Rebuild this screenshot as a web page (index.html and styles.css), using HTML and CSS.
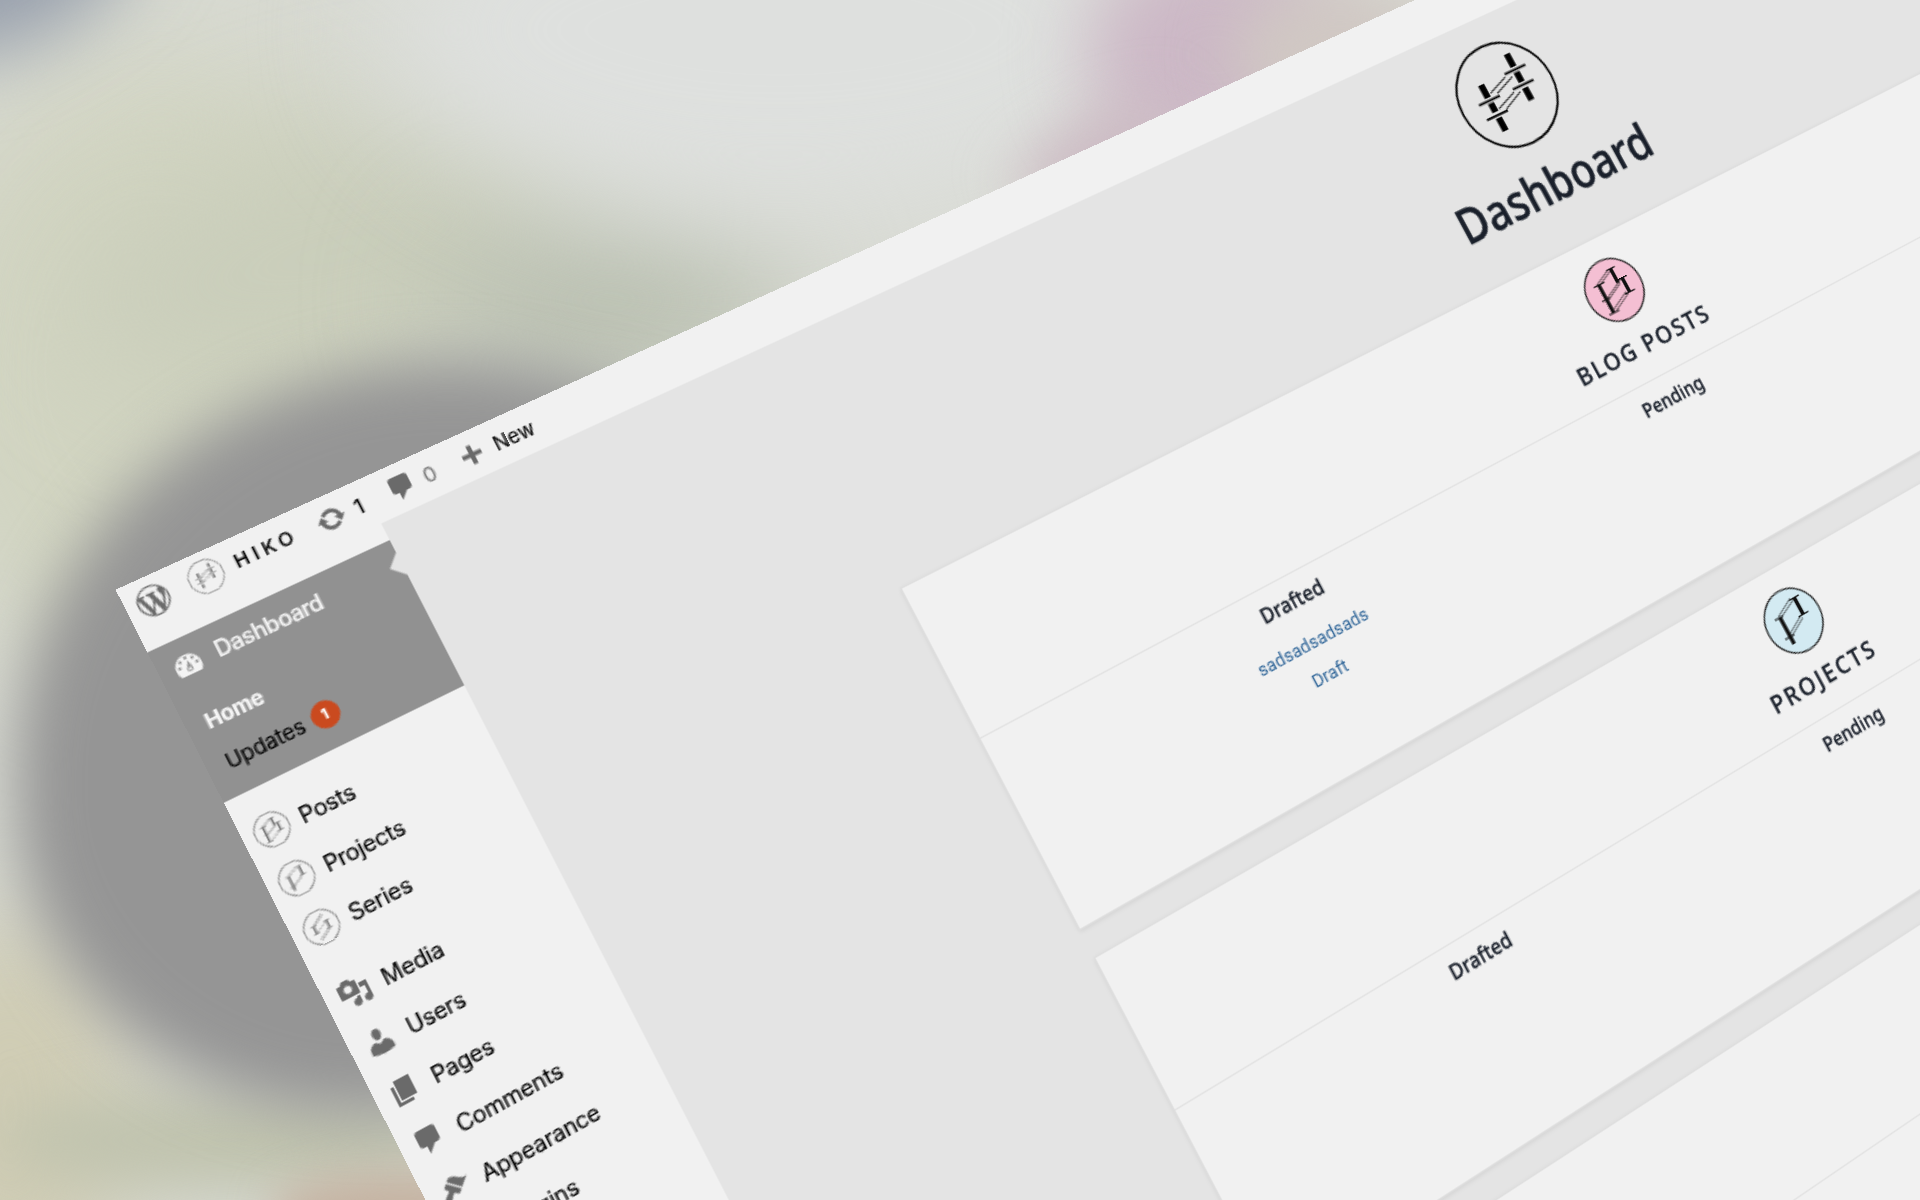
FILE: index.html
```html
<!DOCTYPE html>
<html lang="en">
<head>
<meta charset="utf-8">
<title>Dashboard</title>
<link rel="stylesheet" href="styles.css">
</head>
<body>
<div class="backdrop" aria-hidden="true">
  <i class="blob cream"></i><i class="blob olive"></i><i class="blob sage"></i><i class="blob mist"></i><i class="blob blue"></i>
  <i class="blob mauve"></i><i class="blob sand"></i><i class="blob taupe"></i><i class="blob straw"></i><i class="blob moss"></i><i class="blob clay"></i>
  <i class="blob shadow"></i>
</div>

<svg width="0" height="0" class="defs">
  <symbol id="wp" viewBox="0 0 20 20"><path d="M20 10c0-5.51-4.49-10-10-10C4.48 0 0 4.49 0 10c0 5.52 4.48 10 10 10 5.51 0 10-4.48 10-10zM7.78 15.37L4.37 6.22c.55-.02 1.17-.08 1.17-.08.5-.06.44-1.13-.06-1.11 0 0-1.45.11-2.37.11-.18 0-.37 0-.58-.01C4.12 2.69 6.87 1.11 10 1.11c2.33 0 4.45.87 6.05 2.34-.68-.11-1.65.39-1.65 1.58 0 .74.45 1.36.9 2.1.35.61.55 1.36.55 2.46 0 1.49-1.4 5-1.4 5l-3.03-8.37c.54-.02.82-.17.82-.17.5-.05.44-1.25-.06-1.22 0 0-1.44.12-2.38.12-.87 0-2.33-.12-2.33-.12-.5-.03-.56 1.2-.06 1.22l.92.08 1.26 3.41zM17.41 10c.24-.64.74-1.87.43-4.25.7 1.29 1.05 2.71 1.05 4.25 0 3.29-1.73 6.24-4.4 7.78.97-2.59 1.94-5.2 2.92-7.78zM6.1 18.09C3.12 16.65 1.11 13.53 1.11 10c0-1.3.23-2.48.72-3.59C3.25 10.3 4.67 14.2 6.1 18.09zm4.03-6.63l2.58 6.98c-.86.29-1.76.45-2.71.45-.79 0-1.57-.11-2.29-.33.81-2.38 1.62-4.74 2.42-7.1z"/></symbol>
  <symbol id="update" viewBox="0 0 20 20"><path d="M10.2 3.28c3.53 0 6.43 2.61 6.92 6h2.08l-3.5 4-3.5-4h2.32c-.45-1.97-2.21-3.45-4.32-3.45-1.45 0-2.73.71-3.54 1.78L4.95 5.66C6.23 4.2 8.11 3.28 10.2 3.28zm-.4 13.44c-3.52 0-6.43-2.61-6.92-6H.8l3.5-4c1.17 1.33 2.33 2.67 3.5 4H5.48c.45 1.97 2.21 3.45 4.32 3.45 1.45 0 2.73-.71 3.54-1.78l1.71 1.95c-1.28 1.46-3.15 2.38-5.25 2.38z"/></symbol>
  <symbol id="comment" viewBox="0 0 20 20"><path d="M5 2h9c1.1 0 2 .9 2 2v7c0 1.1-.9 2-2 2h-2l-5 5v-5H5c-1.1 0-2-.9-2-2V4c0-1.1.9-2 2-2z"/></symbol>
  <symbol id="plus" viewBox="0 0 20 20"><path d="M17 8.500v3h-5v5H9v-5H4v-3h5v-5h3v5h5z"/></symbol>
  <symbol id="gauge" viewBox="0 0 20 20"><path fill-rule="evenodd" d="M3.760 17h12.480c1.340-1.250 1.760-3.180 1.760-5.220C18 7.500 14.420 4 10 4s-8 3.500-8 7.780c0 2.040.42 3.970 1.760 5.220zM9 6a1 1 0 1 0 2 0 1 1 0 1 0-2 0zM5.200 7.500a1 1 0 1 0 2 0 1 1 0 1 0-2 0zM12.900 7.500a1 1 0 1 0 2 0 1 1 0 1 0-2 0zM3.500 11a1 1 0 1 0 2 0 1 1 0 1 0-2 0zM14.500 11a1 1 0 1 0 2 0 1 1 0 1 0-2 0zM10.700 8l1.100 4.600c.5 1.600-.4 2.700-1.700 2.700-1.400 0-2.300-1.200-1.700-2.500zM10.100 12.600a.9.9 0 1 0 .01 0z"/></symbol>
  <symbol id="media" viewBox="0 0 20 20"><path d="M13 11V4c0-.55-.45-1-1-1h-1.670L9 1H5L3.670 3H2c-.55 0-1 .45-1 1v7c0 .55.45 1 1 1h10c.55 0 1-.45 1-1zM7 4.500c1.380 0 2.500 1.120 2.500 2.500S8.380 9.500 7 9.500 4.500 8.380 4.500 7 5.620 4.500 7 4.500zM14 6h5v10.500c0 1.380-1.120 2.500-2.500 2.500S14 17.880 14 16.500s1.120-2.500 2.500-2.500c.17 0 .34.02.5.05V9h-3V6zm-4 8.050V13h2v3.500c0 1.380-1.120 2.500-2.500 2.500S7 17.880 7 16.500 8.120 14 9.500 14c.17 0 .34.02.5.05z"/></symbol>
  <symbol id="user" viewBox="0 0 20 20"><path d="M10 9.250c-2.270 0-2.730-3.440-2.730-3.440C7 4.020 7.820 2 9.970 2c2.160 0 2.980 2.020 2.710 3.810 0 0-.41 3.440-2.680 3.440zm0 2.570L12.720 10c2.390 0 4.520 2.330 4.520 4.530v2.490s-3.650 1.130-7.240 1.130c-3.650 0-7.240-1.130-7.240-1.130v-2.490c0-2.250 1.940-4.480 4.470-4.480z"/></symbol>
  <symbol id="pages" viewBox="0 0 20 20"><path d="M6 15V2h10v13H6zm-1 1h8v2H3V5h2v11z"/></symbol>
  <symbol id="brush" viewBox="0 0 20 20"><path d="M14.480 11.060L7.410 3.990l1.500-1.500c.5-.56 2.300-.47 3.510.32 1.210.8 1.430 1.280 2.910 2.100 1.180.64 2.450 1.260 4.450.85zm-.71.71L6.700 4.700 4.930 6.470c-.39.39-.39 1.020 0 1.410l1.060 1.060c.39.39.39 1.030 0 1.420-.6.6-1.430 1.110-2.210 1.690-.35.26-.7.53-1.010.84C1.430 14.230.4 16.080 1.400 17.070c.99 1 2.840-.03 4.180-1.360.31-.31.58-.66.85-1.020.57-.78 1.080-1.610 1.690-2.210.39-.39 1.020-.39 1.410 0l1.060 1.060c.39.39 1.020.39 1.410 0z"/></symbol>

  <symbol id="mark-h" viewBox="-42 -42 84 84">
    <circle r="40.900" fill="none" stroke="currentColor" stroke-width="1.700"/>
    <path fill="none" stroke="currentColor" stroke-width="5.400" d="M-15.800-15V-4M-15.800.5V8M-15.800 13V24M16-28V-17M16-12.500V-4M16 1V11.500"/>
    <path fill="none" stroke="currentColor" stroke-width="1.700" d="M-25.500-1.700h19.500M-25.500 10.800h19.500M6.200-14.600h19.500M6.200-1.600h19.500"/>
    <path fill="none" stroke="currentColor" stroke-width=".9" d="M-12-6.300L5.500-12.600M-7-4L11-10.600M-12 7L6 .5M-6.500 9.600L11 2.200"/>
  </symbol>
  <symbol id="mark-b" viewBox="-25 -25 50 50">
    <circle class="disc" r="24.200" stroke="currentColor" stroke-width="1.100"/>
    <path fill="none" stroke="currentColor" stroke-width="3" d="M-9.800-8.500V15M5.500-15.500V-3.500M10.500-5.500V6.500"/>
    <path fill="none" stroke="currentColor" stroke-width="1.100" d="M-14.500-8.500h10M-14 3.700h7.500M-14 15h9.500M1.500-15.500h8M7-5.500h8M6 6.500h9.500"/>
    <path fill="none" stroke="currentColor" stroke-width=".6" d="M-11.500-9L3-15.500M-8-8.500L4-13.800M-8.500 3L10-5.500M-8.500 4.800L7-2.500M-7 14.500L9 7M-8 12.500L8 5"/>
  </symbol>
  <symbol id="mark-p" viewBox="-25 -25 50 50">
    <circle class="disc" r="24.200" stroke="currentColor" stroke-width="1.100"/>
    <path fill="none" stroke="currentColor" stroke-width="3.200" d="M-9-7V15M9.500-14.500V-.5"/>
    <path fill="none" stroke="currentColor" stroke-width="1.100" d="M-14-7h8M-14 9h9M4.500-14.500h9.500M5-.5h9.500"/>
    <path fill="none" stroke="currentColor" stroke-width=".6" d="M-10-8L6-15.500M-7-7L8-13.500M-9 7.500L7-.5M-7 9L8 1.500"/>
  </symbol>
  <symbol id="mark-s" viewBox="-25 -25 50 50">
    <circle class="disc" r="24.200" stroke="currentColor" stroke-width="1.100"/>
    <path fill="none" stroke="currentColor" stroke-width="3" d="M-9.500-5V6M9.500-6V5"/>
    <path fill="none" stroke="currentColor" stroke-width="1.200" d="M-14-5h9M-14 6h9M5-6h9M5 5h9"/>
    <path fill="none" stroke="currentColor" stroke-width=".9" d="M-10-6L7-17M-8-5L9-15M-9 5L9-5M-9 15L9 5M-7 17L10 7"/>
  </symbol>
</svg>

<div class="screen">
  <header class="adminbar">
    <svg class="ico"><use href="#wp"/></svg>
    <svg class="mark site"><use href="#mark-h"/></svg>
    <span class="brand">HIKO</span>
    <svg class="ico"><use href="#update"/></svg><span class="n-upd">1</span>
    <svg class="ico"><use href="#comment"/></svg><span class="n-com">0</span>
    <svg class="ico"><use href="#plus"/></svg><span class="new">New</span>
  </header>
  <div class="body">
    <nav class="menu">
      <div class="current">
        <a class="item"><svg class="ico"><use href="#gauge"/></svg>Dashboard</a>
        <div class="sub"><a class="on">Home</a><a>Updates<b class="badge">1</b></a></div>
      </div>
      <div class="group">
        <a class="item"><svg class="mark"><use href="#mark-b"/></svg>Posts</a>
        <a class="item"><svg class="mark"><use href="#mark-p"/></svg>Projects</a>
        <a class="item"><svg class="mark"><use href="#mark-s"/></svg>Series</a>
      </div>
      <div class="group">
        <a class="item"><svg class="ico"><use href="#media"/></svg>Media</a>
        <a class="item"><svg class="ico"><use href="#user"/></svg>Users</a>
        <a class="item"><svg class="ico"><use href="#pages"/></svg>Pages</a>
        <a class="item"><svg class="ico"><use href="#comment"/></svg>Comments</a>
        <a class="item"><svg class="ico"><use href="#brush"/></svg>Appearance</a>
        <a class="item plain">Plugins</a>
      </div>
    </nav>
    <main class="main">
      <svg class="logo"><use href="#mark-h"/></svg>
      <h1 class="title">Dashboard</h1>
      <section class="panel">
        <div class="head"><svg class="emblem pink"><use href="#mark-b"/></svg><h2>BLOG POSTS</h2></div>
        <div class="cols">
          <div class="col"><h3>Drafted</h3><a>sadsadsadsads</a><a>Draft</a></div>
          <div class="col"><h3>Pending</h3></div>
          <div class="col"></div>
        </div>
      </section>
      <section class="panel">
        <div class="head"><svg class="emblem sky"><use href="#mark-p"/></svg><h2 class="wide">PROJECTS</h2></div>
        <div class="cols">
          <div class="col"><h3>Drafted</h3></div>
          <div class="col"><h3>Pending</h3></div>
          <div class="col"></div>
        </div>
      </section>
      <section class="panel"><div class="head"></div></section>
    </main>
  </div>
</div>
</body>
</html>
```
FILE: styles.css
```css
* { box-sizing: border-box; }
html, body { margin: 0; height: 100%; overflow: hidden; }
body { position: relative; background: #d9dbd3; font-family: Inter, "Liberation Sans", sans-serif; }
.defs { position: absolute; }

/* out-of-focus photograph behind the screen */
.backdrop { position: absolute; inset: 0; overflow: hidden; background: #d8dad2; }
.blob { position: absolute; border-radius: 50%; filter: blur(60px); }
.cream { left: -100px; top: 60px; width: 520px; height: 620px; background: #d1d4c1; }
.olive { left: 60px; top: 130px; width: 560px; height: 240px; background: #cacebb; transform: rotate(-15deg); }
.sage { left: 430px; top: 210px; width: 360px; height: 180px; background: #b9bfb0; }
.mist { left: 380px; top: -160px; width: 800px; height: 380px; background: #dee0de; }
.blue { left: -140px; top: -125px; width: 290px; height: 170px; background: #98a0ad; filter: blur(38px); transform: rotate(-25deg); }
.mauve { left: 1085px; top: -60px; width: 260px; height: 230px; background: #ccb8c6; filter: blur(38px); }
.sand { left: 1230px; top: -10px; width: 220px; height: 130px; background: #d0c8c3; filter: blur(30px); }
.taupe { left: 1010px; top: 120px; width: 180px; height: 70px; background: #cbb8c2; filter: blur(28px); transform: rotate(-25deg); }
.straw { left: -120px; top: 920px; width: 260px; height: 380px; background: #cfccb4; filter: blur(50px); }
.moss { left: 0; top: 1090px; width: 460px; height: 100px; background: #c0c3ae; filter: blur(28px); }
.clay { left: 270px; top: 1172px; width: 260px; height: 80px; background: #c5b3a2; filter: blur(20px); }
.shadow { left: 16px; top: 362px; width: 860px; height: 752px; background: #959595; filter: blur(30px); border-radius: 50% 50% 50% 40% / 55% 45% 50% 42%; }

/* the admin screen, seen in perspective */
.screen {
  position: absolute; left: 0; top: 0; width: 1898px; height: 1500px;
  background: #e4e4e4; transform-origin: 0 0;
  transform: matrix3d(1.591733, -0.591244, 0, 0.000204138, 0.719609, 1.406863, 0, -0.000029476, 0, 0, 1, 0, 115.55, 589.7, 0, 1);
}
.ico { width: 20px; height: 20px; fill: #6a6a6a; display: block; flex: none; }
.mark { width: 22px; height: 22px; display: block; flex: none; color: #777; }
.disc { fill: var(--disc, none); }

.adminbar { height: 32px; background: #f1f1f1; display: flex; align-items: center; padding: 0 0 1px 7px; font-size: 13px; color: #000; -webkit-text-stroke: .15px; }
.site { margin-left: 13px; }
.brand { margin-left: 8px; width: 54px; font-weight: 500; font-size: 12px; letter-spacing: 3px; }
.n-upd { margin-left: 6px; width: 22px; }
.n-com { margin-left: 5px; width: 23px; color: #777; }
.new { margin-left: 6px; }

.body { display: flex; height: 1468px; }
.menu { position: relative; width: 160px; flex: none; background: #f1f1f1; padding-top: 12px; font-size: 14px; letter-spacing: -.2px; color: #000; -webkit-text-stroke: .15px; }
.item { display: flex; align-items: center; height: 34px; }
.item .ico { margin: 0 8px; }
.item .mark { margin: 0 7px; }
.item.plain { padding-left: 36px; }
.current { background: #919191; }
.current .item { color: #f6f6f6; font-weight: 500; letter-spacing: -.35px; padding-bottom: 1px; }
.current .ico { fill: #f4f4f4; }
.menu::after { content: ""; position: absolute; left: 152px; top: 21px; border: 8px solid transparent; border-right-color: #e4e4e4; border-left: 0; }
.sub { padding: 7px 12px 8px; font-size: 13px; color: #000; letter-spacing: -.1px; }
.sub a { display: flex; align-items: center; height: 28px; }
.sub .on { color: #f8f8f8; font-weight: 700; letter-spacing: -.2px; }
.badge { width: 18px; height: 18px; margin-left: 5px; border-radius: 50%; background: #ca4a1f; color: #fff; font-size: 9px; font-weight: 700; line-height: 18px; text-align: center; letter-spacing: 0; }
.group { padding-top: 11px; }

.main { flex: 1; padding: 20px 282px 0 280px; display: flex; flex-direction: column; align-items: center; font-family: "Noto Sans", "Open Sans", sans-serif; color: #1a202b; }
.logo { width: 84px; height: 84px; color: #000; flex: none; }
.title { margin: 7px 0 24px; height: 52px; line-height: 52px; font-size: 37px; font-weight: 500; -webkit-text-stroke: .5px; transform: scaleX(.918); }
.panel { width: 1174px; height: 259px; flex: none; margin-bottom: 20px; background: #f1f1f1; border: 1px solid #dedede; box-shadow: 0 1px 3px rgba(0, 0, 0, .08); }
.head { height: 114px; border-bottom: 1px solid #e2e2e2; display: flex; flex-direction: column; align-items: center; padding: 16px 0 0 2px; }
.emblem { width: 50px; height: 50px; flex: none; color: #111; }
.pink { --disc: #f4bfd3; }
.sky { --disc: #d3eaf2; }
.head h2 { margin: 6px 0 0; font-size: 18px; line-height: 30px; font-weight: 500; -webkit-text-stroke: .3px; letter-spacing: 1.600px; }
.head .wide { letter-spacing: 2.100px; }
.cols { display: flex; padding: 4px 68px 0 71px; }
.col { flex: 1; display: flex; flex-direction: column; align-items: center; }
.col h3 { margin: 0; font-size: 15px; line-height: 26px; font-weight: 500; -webkit-text-stroke: .25px; transform: scaleX(.95); }
.col a { font-family: Roboto, Inter, sans-serif; font-size: 13px; line-height: 24.500px; letter-spacing: .08px; color: #2f6598; position: relative; top: 8px; }
```
